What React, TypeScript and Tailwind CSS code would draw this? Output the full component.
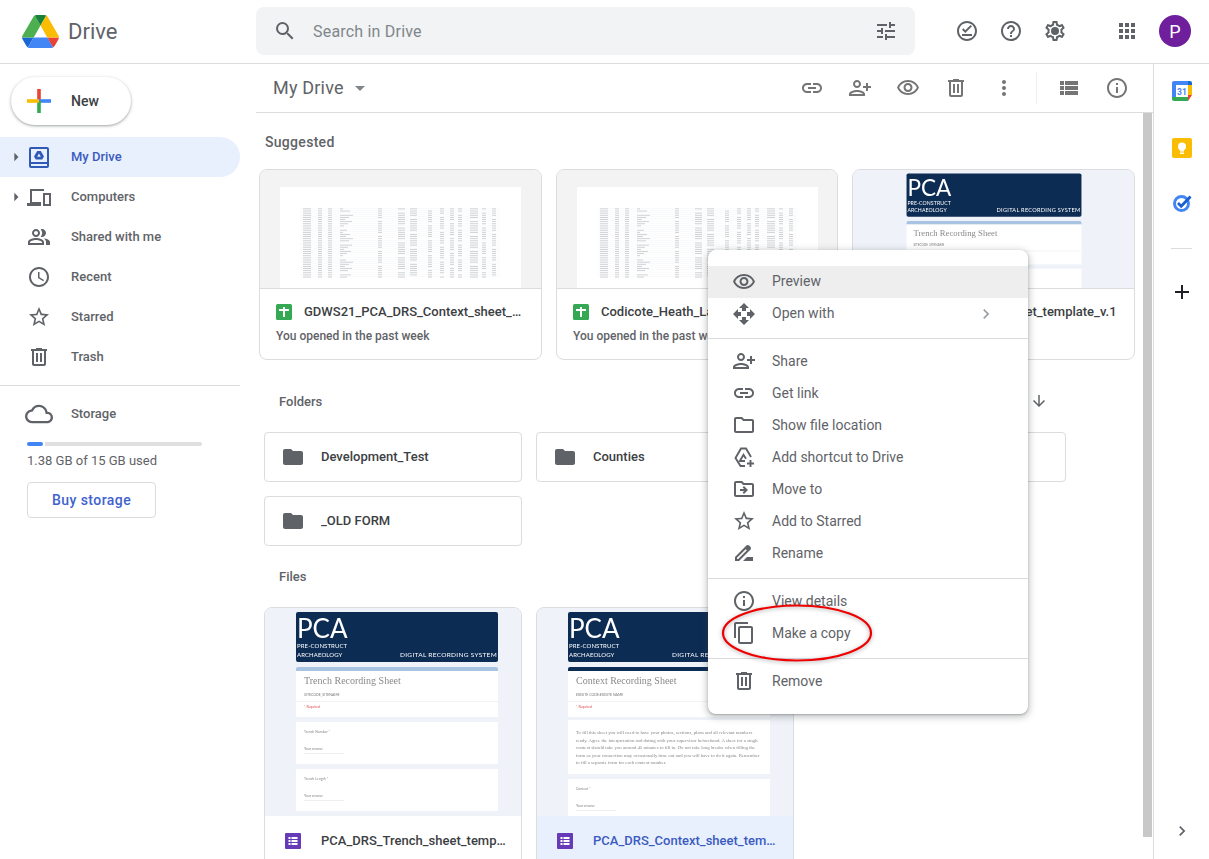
import type { ReactNode } from 'react'
import {
  MdApps,
  MdChevronRight,
  MdContentCopy,
  MdDriveFileRenameOutline,
  MdFolder,
  MdHelpOutline,
  MdInfoOutline,
  MdLink,
  MdMoreVert,
  MdOpenWith,
  MdOutlineAccessTime,
  MdOutlineCloud,
  MdOutlineDriveFileMove,
  MdOutlineFolder,
  MdOutlineOfflinePin,
  MdOutlinePeopleAlt,
  MdOutlinePersonAdd,
  MdOutlineVisibility,
  MdSearch,
  MdStarBorder,
  MdTune,
  MdViewList,
  MdAdd,
  MdArrowDownward,
  MdArrowDropDown,
  MdArrowRight,
} from 'react-icons/md'

function DriveLogo() {
  return (
    <svg viewBox="0 0 87.3 78" className="h-[33px] w-[37px]">
      <path d="m6.6 66.85 3.85 6.65c.8 1.4 1.95 2.5 3.3 3.3l13.75-23.8h-27.5c0 1.55.4 3.1 1.2 4.5z" fill="#1967d2" />
      <path d="m43.65 25-13.75-23.8c-1.35.8-2.5 1.9-3.3 3.3l-25.4 44a9.06 9.06 0 0 0 -1.2 4.5h27.5z" fill="#4caf50" />
      <path d="m73.55 76.8c1.35-.8 2.5-1.9 3.3-3.3l1.6-2.75 7.65-13.25c.8-1.4 1.2-2.95 1.2-4.5h-27.502l5.852 11.5z" fill="#ea4335" />
      <path d="m43.65 25 13.75-23.8c-1.35-.8-2.9-1.2-4.5-1.2h-18.5c-1.6 0-3.15.45-4.5 1.2z" fill="#188038" />
      <path d="m59.8 53h-32.3l-13.75 23.8c1.35.8 2.9 1.2 4.5 1.2h50.8c1.6 0 3.15-.45 4.5-1.2z" fill="#4285f4" />
      <path d="m73.4 26.5-12.7-22c-.8-1.4-1.95-2.5-3.3-3.3l-13.75 23.8 16.15 28h27.45c0-1.55-.4-3.1-1.2-4.5z" fill="#fbbc04" />
    </svg>
  )
}

function NewPlus() {
  return (
    <svg viewBox="0 0 24 24" className="h-6 w-6">
      <rect x="10.2" y="0" width="3.6" height="12" fill="#ea4335" />
      <rect x="12" y="10.2" width="12" height="3.6" fill="#4285f4" />
      <rect x="10.2" y="12" width="3.6" height="12" fill="#34a853" />
      <rect x="0" y="10.2" width="12" height="3.6" fill="#fbbc04" />
    </svg>
  )
}

function TrashIcon({ className }: { className?: string }) {
  return (
    <svg viewBox="0 0 24 24" className={className ?? 'h-6 w-6'} fill="currentColor">
      <path d="M15 4V3H9v1H4v2h1v13c0 1.1.9 2 2 2h10c1.1 0 2-.9 2-2V6h1V4h-5zm2 15H7V6h10v13zM9 8h2v9H9zm4 0h2v9h-2z" />
    </svg>
  )
}

function GearIcon() {
  return (
    <svg viewBox="0 0 24 24" className="h-6 w-6" fill="currentColor">
      <path d="M19.43 12.98c.04-.32.07-.64.07-.98 0-.34-.03-.66-.07-.98l2.11-1.65c.19-.15.24-.42.12-.64l-2-3.46c-.09-.16-.26-.25-.44-.25-.06 0-.12.01-.17.03l-2.49 1c-.52-.4-1.08-.73-1.69-.98l-.38-2.65C14.46 2.18 14.25 2 14 2h-4c-.25 0-.46.18-.49.42l-.38 2.65c-.61.25-1.17.59-1.69.98l-2.49-1c-.06-.02-.12-.03-.18-.03-.17 0-.34.09-.43.25l-2 3.46c-.13.22-.07.49.12.64l2.11 1.65c-.04.32-.07.65-.07.98 0 .33.03.66.07.98l-2.11 1.65c-.19.15-.24.42-.12.64l2 3.46c.09.16.26.25.44.25.06 0 .12-.01.17-.03l2.49-1c.52.4 1.08.73 1.69.98l.38 2.65c.03.24.24.42.49.42h4c.25 0 .46-.18.49-.42l.38-2.65c.61-.25 1.17-.59 1.69-.98l2.49 1c.06.02.12.03.18.03.17 0 .34-.09.43-.25l2-3.46c.12-.22.07-.49-.12-.64l-2.11-1.65zm-1.98-1.71c.04.31.05.52.05.73 0 .21-.02.43-.05.73l-.14 1.13.89.7 1.08.84-.7 1.21-1.27-.51-1.04-.42-.9.68c-.43.32-.84.56-1.25.73l-1.06.43-.16 1.13-.2 1.35h-1.4l-.19-1.35-.16-1.13-1.06-.43c-.43-.18-.83-.41-1.23-.71l-.91-.7-1.06.43-1.27.51-.7-1.21 1.08-.84.89-.7-.14-1.13c-.03-.31-.05-.54-.05-.74s.02-.43.05-.73l.14-1.13-.89-.7-1.08-.84.7-1.21 1.27.51 1.04.42.9-.68c.43-.32.84-.56 1.25-.73l1.06-.43.16-1.13.2-1.35h1.39l.19 1.35.16 1.13 1.06.43c.43.18.83.41 1.23.71l.91.7 1.06-.43 1.27-.51.7 1.21-1.07.85-.89.7.14 1.13z" />
      <circle cx="12" cy="12" r="4" />
    </svg>
  )
}

function PersonAdd({ className }: { className?: string }) {
  return <MdOutlinePersonAdd className={`-scale-x-100 ${className ?? ''}`} />
}

function MyDriveIcon() {
  return (
    <svg viewBox="0 0 20 21" className="h-[21px] w-[20px]">
      <path
        fill="#2f5bb7"
        fillRule="evenodd"
        d="M2 0h16a2 2 0 0 1 2 2v17a2 2 0 0 1-2 2H2a2 2 0 0 1-2-2V2a2 2 0 0 1 2-2zm0 2v13h16V2H2zm0 15v2h16v-2H2z"
      />
      <path fill="#2f5bb7" d="M8.2 4h3.6l3.2 5.6-1.8 3H6.8l-1.8-3L8.2 4zm1.8 2.6L8.2 9.8h3.6L10 6.6z" />
    </svg>
  )
}

function ComputersIcon() {
  return (
    <svg viewBox="0 0 24 17" className="h-[17px] w-6" fill="#5f6368">
      <path d="M3 0h14v2H5v11h9v4H0v-3h3V0z" />
      <path fillRule="evenodd" d="M16 4h8v13h-8V4zm2 2v9h4V6h-4z" />
    </svg>
  )
}

function AddShortcutIcon() {
  return (
    <svg viewBox="0 0 24 24" className="h-6 w-6" fill="none" stroke="#5f6368" strokeWidth="1.9">
      <path d="M13 21H8.500L3.500 13 9 3.500h5l5 8.500" />
      <path d="M13 16H7.800l3.700-6.200 2.500 4" />
      <path d="M18.500 15v7M15 18.500h7" />
    </svg>
  )
}

function SheetsIcon() {
  return (
    <svg viewBox="0 0 16 16" className="h-4 w-4 shrink-0">
      <rect width="16" height="16" rx="1.5" fill="#34a853" />
      <path d="M7 3h2v2h4v2H9v6H7V7H3V5h4z" fill="#fff" />
    </svg>
  )
}

function FormsIcon() {
  return (
    <svg viewBox="0 0 16 16" className="h-4 w-4 shrink-0">
      <rect width="16" height="16" rx="1" fill="#673ab7" />
      <path d="M3.500 4h2v2h-2zM6.500 4h6v2h-6zM3.500 7h2v2h-2zM6.500 7h6v2h-6zM3.500 10h2v2h-2zM6.500 10h6v2h-6z" fill="#fff" />
    </svg>
  )
}

function CalendarIcon() {
  return (
    <svg viewBox="0 0 20 20" className="h-5 w-5">
      <rect width="20" height="20" rx="2" fill="#fff" />
      <path d="M2 0h14v4H4v12H0V2a2 2 0 0 1 2-2z" fill="#4285f4" />
      <path d="M16 0h2a2 2 0 0 1 2 2v2h-4z" fill="#1967d2" />
      <path d="M16 4h4v10h-4z" fill="#fbbc04" />
      <path d="M0 16h16v4H2a2 2 0 0 1-2-2z" fill="#34a853" />
      <path d="M16 14h4l-4 6z" fill="#ea4335" />
      <text x="10" y="13.500" textAnchor="middle" fontSize="8.500" fontWeight="700" fill="#4285f4" fontFamily="Roboto, sans-serif">
        31
      </text>
    </svg>
  )
}

function KeepIcon() {
  return (
    <svg viewBox="0 0 20 20" className="h-5 w-5">
      <rect width="20" height="20" rx="2" fill="#fbbc04" />
      <circle cx="10" cy="8.500" r="4" fill="#fff" />
      <rect x="8" y="11" width="4" height="2.500" fill="#fff" />
      <rect x="8" y="14.500" width="4" height="1.500" fill="#fff" />
    </svg>
  )
}

function TasksIcon() {
  return (
    <svg viewBox="0 0 20 20" className="h-5 w-5" fill="none">
      <circle cx="9.500" cy="10.500" r="7" stroke="#4285f4" strokeWidth="3" />
      <path d="M6 10l3.200 3.200L18.500 3.500" stroke="#1a5fd0" strokeWidth="2.800" />
    </svg>
  )
}

const tableRows = Array.from({ length: 33 }, (_, i) => i)
const tableCols = [3, 18, 28, 40, 78, 98, 110, 128, 140, 150, 158, 170, 182, 192]

function SheetThumb() {
  return (
    <div className="flex h-full items-start justify-center overflow-hidden bg-[#f3f3f3] pt-[17px]">
      <div className="h-[110px] w-[241px] bg-white pl-[20px] pt-[21px]">
        <svg viewBox="0 0 200 72" className="h-[72px] w-[200px] blur-[0.35px]">
          {tableRows.map((row) => (
            <rect key={row} x="0" y={row * 2.13} width="200" height="0.3" fill="#eceef0" />
          ))}
          {tableRows.map((row) =>
            tableCols.map((col, c) => {
              if ((row * 3 + c * 5) % 7 === 0 && c > 2) return null
              return (
                <rect
                  key={`${row}-${c}`}
                  x={col}
                  y={row * 2.13 + 0.5}
                  width={c === 0 ? 8 : c === 3 ? 3 + ((row * 7) % 11) : c === 5 || c === 6 ? 7 : c === 11 ? 8 : 4}
                  height="0.8"
                  fill="#c6c8cc"
                />
              )
            }),
          )}
        </svg>
      </div>
    </div>
  )
}

function FormThumb({ kind, small }: { kind: 'trench' | 'context'; small?: boolean }) {
  const isTrench = kind === 'trench'
  return (
    <div className="flex h-full justify-center overflow-hidden bg-[#eff3f9]">
      <div className={`w-[202px] shrink-0 origin-top pt-[4px] blur-[0.3px] font-['Lato',sans-serif] ${small ? 'scale-[0.866]' : 'ml-[8px]'}`}>
        <div className="flex h-[50px] flex-col rounded-[2px] bg-[#0d2c54] pl-[1px] pr-[1px] text-white">
          <div className="h-[29px] text-[26px] leading-[32px]">PCA</div>
          <div className="mt-[1px] text-[6px] leading-[8px] tracking-[0.1px]">PRE-CONSTRUCT</div>
          <div className="flex justify-between text-[6px] leading-[9px] tracking-[0.1px]">
            <span>ARCHAEOLOGY</span>
            <span className="text-[6.5px] tracking-[0.3px]">DIGITAL RECORDING SYSTEM</span>
          </div>
        </div>
        <div className={`mt-[5px] h-[4px] rounded-t-[2px] ${isTrench ? 'bg-[#a9c4e0]' : 'bg-[#0d2c54]'}`} />
        <div className="h-[46px] bg-white">
          <div className="px-[8px] pt-[3px] font-['Liberation_Serif',serif] text-[10px] leading-[14px] text-[#8a8a8a]">
            {isTrench ? 'Trench Recording Sheet' : 'Context Recording Sheet'}
          </div>
          <div className="px-[8px] pt-[5px] text-[3.5px] leading-[5px] text-[#777]">
            {isTrench ? 'SITECODE_SITENAME' : 'EXISITE CODE:EXISITE NAME'}
          </div>
          <div className="mt-[3px] border-t border-[#f1f3f6] px-[8px] pt-[3px] text-[3.5px] leading-[5px] text-[#e05050]">
            * Required
          </div>
        </div>
        {isTrench ? (
          <>
            <AnswerCard label="Trench Number" />
            <AnswerCard label="Trench Length" />
          </>
        ) : (
          <>
            <div className="mt-[3px] h-[54px] bg-white px-[8px] pt-[9px] font-['Liberation_Serif',serif] text-[4.8px] leading-[7.6px] text-[#888]">
              To fill this sheet you will need to have your photos, sections, plans and all relevant numbers ready. Agree
              the interpretation and dating with your supervisor beforehand. A sheet for a single context should take
              you around 45 minutes to fill in. Do not take long breaks when filling the form as your connection may
              occasionally time out and you will have to do it again. Remember to fill a separate form for each context
              number.
            </div>
            <AnswerCard label="Context" />
          </>
        )}
      </div>
    </div>
  )
}

function AnswerCard({ label }: { label: string }) {
  return (
    <div className="mt-[5px] h-[42px] bg-white px-[8px] pt-[8px] text-[3.5px] leading-[5px] text-[#888]">
      <div>
        {label} <span className="text-[#e05050]">*</span>
      </div>
      <div className="mt-[12px] w-[40px] border-b border-[#eee] pb-[1px]">Your answer</div>
    </div>
  )
}

function SuggestedCard({ name, sub, thumb }: { name: string; sub?: string; thumb: ReactNode }) {
  return (
    <div className="flex h-[191px] flex-col overflow-hidden rounded-[8px] border border-[#dadce0] bg-white">
      <div className="h-[119px] border-b border-[#dadce0]">{thumb}</div>
      <div className="px-4 pt-[14px]">
        <div className="flex items-center gap-3">
          <SheetsIcon />
          <span className="truncate text-[13px] leading-[18px] font-medium text-[#3c4043]">{name}</span>
        </div>
        <div className="mt-[7px] text-[12px] leading-4 font-medium text-[#5f6368]">{sub}</div>
      </div>
    </div>
  )
}

function FolderCard({ name }: { name?: string }) {
  return (
    <div className="flex h-[50px] items-center rounded-[4px] border border-[#dadce0] bg-white pl-[16px]">
      <MdFolder className="h-6 w-6 text-[#5f6368]" />
      {name && <span className="ml-[16px] truncate text-[13px] font-medium text-[#3c4043]">{name}</span>}
    </div>
  )
}

function FileCard({ name, thumb, selected }: { name: string; thumb: ReactNode; selected?: boolean }) {
  return (
    <div className={`h-[270px] overflow-hidden rounded-t-[8px] border border-[#dadce0] ${selected ? 'bg-[#e8f0fe]' : 'bg-white'}`}>
      <div className="h-[208px]">{thumb}</div>
      <div className="flex h-[50px] items-center pl-[20px] pr-[14px]">
        <FormsIcon />
        <span className={`ml-5 truncate text-[13px] font-medium ${selected ? 'text-[#3c5bbf]' : 'text-[#3c4043]'}`}>{name}</span>
      </div>
    </div>
  )
}

const navItems = [
  { label: 'My Drive', icon: <MyDriveIcon />, caret: true, active: true },
  { label: 'Computers', icon: <ComputersIcon />, caret: true },
  { label: 'Shared with me', icon: <MdOutlinePeopleAlt className="h-[26px] w-[26px]" /> },
  { label: 'Recent', icon: <MdOutlineAccessTime className="h-6 w-6" /> },
  { label: 'Starred', icon: <MdStarBorder className="h-6 w-6" /> },
  { label: 'Trash', icon: <TrashIcon /> },
]

function Sidebar() {
  return (
    <aside className="w-[256px] shrink-0 pt-[13px]">
      <button className="ml-[11px] flex h-[48px] w-[120px] items-center rounded-full bg-white pl-4 text-[14px] font-medium text-[#3c4043] shadow-[0_1px_2px_0_rgba(60,64,67,0.3),0_1px_3px_1px_rgba(60,64,67,0.15)]">
        <NewPlus />
        <span className="ml-[20px]">New</span>
      </button>
      <nav className="mt-[12px] w-[240px]">
        {navItems.map((item) => (
          <div
            key={item.label}
            className={`flex h-[40px] items-center rounded-r-full ${item.active ? 'bg-[#e8f0fe] text-[#3c5bbf]' : 'text-[#5f6368]'}`}
          >
            <span className="flex w-[27px] shrink-0 justify-end text-[#5f6368]">
              {item.caret && <MdArrowRight className="mr-[1px] h-5 w-5" />}
            </span>
            <span className="flex w-[24px] shrink-0 justify-center">{item.icon}</span>
            <span className="ml-[20px] text-[13px] font-medium">{item.label}</span>
          </div>
        ))}
      </nav>
      <div className="mt-[8px] w-[240px] border-t border-[#dadce0] pt-[8px] pl-[27px]">
        <div className="flex h-[40px] items-center text-[#5f6368]">
          <MdOutlineCloud className="-ml-[2px] h-7 w-7" />
          <span className="ml-[18px] text-[13px] font-medium">Storage</span>
        </div>
        <div className="mt-[8px] flex h-[4px] w-[175px] gap-[2px]">
          <div className="w-[16px] rounded-full bg-[#4285f4]" />
          <div className="flex-1 rounded-r-full bg-[#e0e0e0]" />
        </div>
        <div className="mt-[7px] text-[13px] leading-[16px] text-[#5f6368]">1.38 GB of 15 GB used</div>
        <button className="mt-[13px] h-[36px] w-[129px] rounded-[4px] border border-[#dadce0] text-[14px] font-medium tracking-[0.45px] text-[#3f62cf]">
          Buy storage
        </button>
      </div>
    </aside>
  )
}

function TopBar() {
  return (
    <header className="flex h-[64px] shrink-0 items-center border-b border-[#dadce0] pb-[1px]">
      <div className="flex w-[256px] shrink-0 items-center pl-[22px]">
        <DriveLogo />
        <span className="ml-[9px] text-[22px] text-[#5f6368]">Drive</span>
      </div>
      <div className="flex h-[48px] w-[659px] items-center rounded-[8px] bg-[#f1f3f4] pl-[17px] pr-[17px] text-[#5f6368]">
        <MdSearch className="h-6 w-6" />
        <span className="ml-[16px] flex-1 pt-[2px] text-[16px] tracking-[0.2px] text-[#80868b]">Search in Drive</span>
        <MdTune className="h-6 w-6" />
      </div>
      <div className="ml-[40px] flex w-[112px] justify-between text-[#5f6368]">
        <MdOutlineOfflinePin className="h-6 w-6" />
        <MdHelpOutline className="h-6 w-6" />
        <GearIcon />
      </div>
      <MdApps className="ml-[48px] h-6 w-6 text-[#5f6368]" />
      <div className="ml-[20px] flex h-8 w-8 items-center justify-center rounded-full bg-[#6f1f9b] text-[18px] text-white">P</div>
    </header>
  )
}

function Toolbar() {
  return (
    <div className="flex h-[49px] shrink-0 items-center border-b border-[#dadce0] pl-[17px] text-[#5f6368]">
      <span className="pb-[2px] text-[18px] tracking-[0.2px]">My Drive</span>
      <MdArrowDropDown className="ml-[4px] h-6 w-6 text-[#80868b]" />
      <div className="ml-auto flex items-center text-[#757575]">
        <MdLink className="mx-3 h-6 w-6" />
        <PersonAdd className="mx-3 h-6 w-6" />
        <MdOutlineVisibility className="mx-3 h-6 w-6" />
        <TrashIcon className="mx-3 h-6 w-6" />
        <MdMoreVert className="mx-3 h-6 w-6" />
        <div className="mx-[8px] h-[32px] border-l border-[#eeeeee]" />
        <MdViewList className="mx-3 h-6 w-6" />
        <MdInfoOutline className="mx-3 h-6 w-6" />
      </div>
      <div className="w-[12px]" />
    </div>
  )
}

const menuGroups = [
  [
    { label: 'Preview', icon: <MdOutlineVisibility />, hover: true },
    { label: 'Open with', icon: <MdOpenWith />, more: true },
  ],
  [
    { label: 'Share', icon: <PersonAdd /> },
    { label: 'Get link', icon: <MdLink /> },
    { label: 'Show file location', icon: <MdOutlineFolder /> },
    { label: 'Add shortcut to Drive', icon: <AddShortcutIcon /> },
    { label: 'Move to', icon: <MdOutlineDriveFileMove /> },
    { label: 'Add to Starred', icon: <MdStarBorder /> },
    { label: 'Rename', icon: <MdDriveFileRenameOutline /> },
  ],
  [
    { label: 'View details', icon: <MdInfoOutline /> },
    { label: 'Make a copy', icon: <MdContentCopy /> },
  ],
  [{ label: 'Remove', icon: <TrashIcon /> }],
]

function ContextMenu() {
  return (
    <div className="absolute left-[708px] top-[250px] w-[320px] rounded-[8px] bg-white pt-[16px] pb-[17px] shadow-[0_2px_6px_2px_rgba(60,64,67,0.25),0_1px_2px_0_rgba(60,64,67,0.3)]">
      {menuGroups.map((group, i) => (
        <div
          key={group[0].label}
          className={i === 0 ? '' : `border-t border-[#dadce0] pt-[6px] ${i === 1 ? 'mt-[8px]' : 'mt-[9px]'}`}
        >
          {group.map((item: { label: string; icon: ReactNode; hover?: boolean; more?: boolean }) => (
            <div key={item.label} className={`flex h-[32px] items-center pl-[24px] pr-[32px] ${item.hover ? 'bg-[#eeeeee]' : ''}`}>
              <span className="flex h-6 w-6 items-center justify-center text-[24px] text-[#5f6368]">{item.icon}</span>
              <span className={`ml-[16px] flex-1 text-[14px] text-[#5f6368] ${i === 0 ? 'pb-[2px]' : ''}`}>{item.label}</span>
              {item.more && <MdChevronRight className="h-5 w-5 text-[#9aa0a6]" />}
            </div>
          ))}
        </div>
      ))}
    </div>
  )
}

function RightRail() {
  return (
    <aside className="flex w-[56px] shrink-0 flex-col items-center border-l border-[#dadce0] pt-[17px]">
      <CalendarIcon />
      <div className="mt-[37px]">
        <KeepIcon />
      </div>
      <div className="mt-[35px]">
        <TasksIcon />
      </div>
      <div className="mt-[35px] w-[21px] border-t border-[#dadce0]" />
      <MdAdd className="mt-[31px] h-6 w-6 text-[#202124]" />
      <MdChevronRight className="mt-auto mb-[18px] h-5 w-5 text-[#5f6368]" />
    </aside>
  )
}

export default function App() {
  return (
    <div className="relative flex h-[859px] w-[1209px] flex-col overflow-hidden bg-white font-['Roboto',sans-serif]">
      <TopBar />
      <div className="flex min-h-0 flex-1">
        <Sidebar />
        <main className="flex min-w-0 flex-1 flex-col">
          <Toolbar />
          <div className="flex min-h-0 flex-1">
            <div className="min-w-0 flex-1 overflow-hidden">
              <div className="pl-[9px] pt-[19px] text-[14px] leading-[20px] font-medium tracking-[0.3px] text-[#5f6368]">Suggested</div>
              <div className="mt-[17px] grid grid-cols-[283px_282px_283px] gap-x-[14px] pl-[3px]">
                <SuggestedCard name="GDWS21_PCA_DRS_Context_sheet_template_v.1" sub="You opened in the past week" thumb={<SheetThumb />} />
                <SuggestedCard name="Codicote_Heath_Lane_DRS_Context_sheet" sub="You opened in the past week" thumb={<SheetThumb />} />
                <SuggestedCard name="PCA_DRS_Trench_sheet_template_v.1" thumb={<FormThumb kind="trench" small />} />
              </div>
              <div className="mt-[32px] flex h-[20px] items-center pl-[23px] pr-[95px] text-[13px] font-medium text-[#5f6368]">
                <span className="flex-1">Folders</span>
                <MdArrowDownward className="mb-[3px] h-[18px] w-[18px]" />
              </div>
              <div className="mt-[20px] grid grid-cols-[258px_258px_258px] gap-x-[14px] gap-y-[14px] pl-[8px]">
                <FolderCard name="Development_Test" />
                <FolderCard name="Counties" />
                <FolderCard />
                <FolderCard name="_OLD FORM" />
              </div>
              <div className="mt-[21px] pl-[23px] text-[13px] leading-[20px] font-medium text-[#5f6368]">Files</div>
              <div className="mt-[20px] grid grid-cols-[258px_258px] gap-x-[14px] pl-[8px]">
                <FileCard name="PCA_DRS_Trench_sheet_template_v.1" thumb={<FormThumb kind="trench" />} />
                <FileCard name="PCA_DRS_Context_sheet_template_v.1" thumb={<FormThumb kind="context" />} selected />
              </div>
            </div>
            <div className="w-[10px] shrink-0 pr-[1px]">
              <div className="h-[724px] bg-[#c8c8c8]" />
            </div>
          </div>
        </main>
        <RightRail />
      </div>
      <ContextMenu />
      <svg viewBox="0 0 154 62" className="pointer-events-none absolute left-[720px] top-[602px] h-[62px] w-[154px] drop-shadow-[0_1px_2px_rgba(0,0,0,0.35)]" fill="none">
        <ellipse cx="77" cy="31" rx="74" ry="27.5" stroke="#ee0000" strokeWidth="2.2" />
      </svg>
    </div>
  )
}
